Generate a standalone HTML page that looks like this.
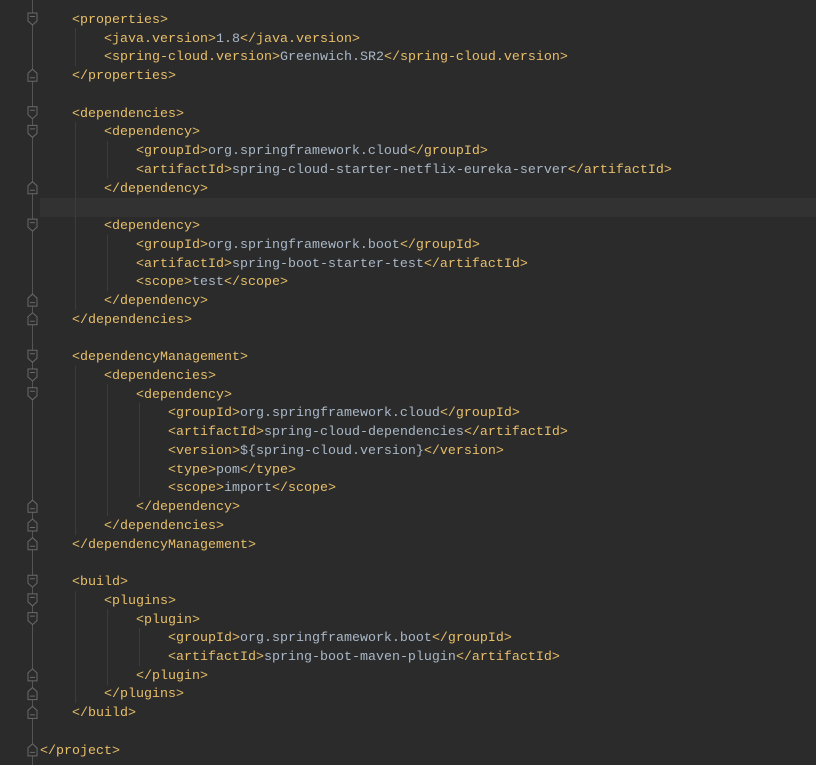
<!DOCTYPE html>
<html><head><meta charset="utf-8"><style>
html,body{margin:0;padding:0;background:#2b2b2b;width:816px;height:765px;overflow:hidden}
.hl{position:absolute;left:40px;top:198px;width:776px;height:19px;background:#323232}
pre{position:absolute;left:40px;top:12px;margin:0;font-family:"Liberation Mono",monospace;font-size:13.33px;line-height:18.74px;color:#a9b7c6}
.t{color:#e8bf6a}
svg{position:absolute;left:0;top:0}
</style></head><body>
<div class="hl"></div>
<svg width="816" height="765">
<line x1="32.5" y1="0" x2="32.5" y2="765" stroke="#555" stroke-width="1"/>
<g stroke="#3c3c3c" stroke-width="1">
<line x1="75.5" y1="28" x2="75.5" y2="66"/>
<line x1="75.5" y1="122" x2="75.5" y2="310"/>
<line x1="107.5" y1="141" x2="107.5" y2="178"/>
<line x1="107.5" y1="235" x2="107.5" y2="291"/>
<line x1="75.5" y1="366" x2="75.5" y2="535"/>
<line x1="107.5" y1="384" x2="107.5" y2="516"/>
<line x1="139.5" y1="403" x2="139.5" y2="497"/>
<line x1="75.5" y1="591" x2="75.5" y2="703"/>
<line x1="107.5" y1="609" x2="107.5" y2="685"/>
<line x1="139.5" y1="628" x2="139.5" y2="666"/>
</g>
<g fill="#2b2b2b" stroke="#6a6a6a" stroke-width="1">
<path d="M28 13h9v8l-4.5 4-4.5-4z M30 16.5h5"/>
<path d="M28 106.7h9v8l-4.5 4-4.5-4z M30 110.2h5"/>
<path d="M28 125.4h9v8l-4.5 4-4.5-4z M30 128.9h5"/>
<path d="M28 219.1h9v8l-4.5 4-4.5-4z M30 222.6h5"/>
<path d="M28 350.3h9v8l-4.5 4-4.5-4z M30 353.8h5"/>
<path d="M28 369h9v8l-4.5 4-4.5-4z M30 372.5h5"/>
<path d="M28 387.8h9v8l-4.5 4-4.5-4z M30 391.3h5"/>
<path d="M28 575.2h9v8l-4.5 4-4.5-4z M30 578.7h5"/>
<path d="M28 593.9h9v8l-4.5 4-4.5-4z M30 597.4h5"/>
<path d="M28 612.6h9v8l-4.5 4-4.5-4z M30 616.1h5"/>
<path d="M28 81.2h9v-8l-4.5-4-4.5 4z M30 77.7h5"/>
<path d="M28 193.7h9v-8l-4.5-4-4.5 4z M30 190.2h5"/>
<path d="M28 306.1h9v-8l-4.5-4-4.5 4z M30 302.6h5"/>
<path d="M28 324.8h9v-8l-4.5-4-4.5 4z M30 321.3h5"/>
<path d="M28 512.2h9v-8l-4.5-4-4.5 4z M30 508.7h5"/>
<path d="M28 531h9v-8l-4.5-4-4.5 4z M30 527.5h5"/>
<path d="M28 549.7h9v-8l-4.5-4-4.5 4z M30 546.2h5"/>
<path d="M28 680.9h9v-8l-4.5-4-4.5 4z M30 677.4h5"/>
<path d="M28 699.6h9v-8l-4.5-4-4.5 4z M30 696.1h5"/>
<path d="M28 718.4h9v-8l-4.5-4-4.5 4z M30 714.9h5"/>
<path d="M28 755.9h9v-8l-4.5-4-4.5 4z M30 752.4h5"/>
</g>
</svg>
<pre>    <span class="t">&lt;properties&gt;</span>
        <span class="t">&lt;java.version&gt;</span>1.8<span class="t">&lt;/java.version&gt;</span>
        <span class="t">&lt;spring-cloud.version&gt;</span>Greenwich.SR2<span class="t">&lt;/spring-cloud.version&gt;</span>
    <span class="t">&lt;/properties&gt;</span>

    <span class="t">&lt;dependencies&gt;</span>
        <span class="t">&lt;dependency&gt;</span>
            <span class="t">&lt;groupId&gt;</span>org.springframework.cloud<span class="t">&lt;/groupId&gt;</span>
            <span class="t">&lt;artifactId&gt;</span>spring-cloud-starter-netflix-eureka-server<span class="t">&lt;/artifactId&gt;</span>
        <span class="t">&lt;/dependency&gt;</span>

        <span class="t">&lt;dependency&gt;</span>
            <span class="t">&lt;groupId&gt;</span>org.springframework.boot<span class="t">&lt;/groupId&gt;</span>
            <span class="t">&lt;artifactId&gt;</span>spring-boot-starter-test<span class="t">&lt;/artifactId&gt;</span>
            <span class="t">&lt;scope&gt;</span>test<span class="t">&lt;/scope&gt;</span>
        <span class="t">&lt;/dependency&gt;</span>
    <span class="t">&lt;/dependencies&gt;</span>

    <span class="t">&lt;dependencyManagement&gt;</span>
        <span class="t">&lt;dependencies&gt;</span>
            <span class="t">&lt;dependency&gt;</span>
                <span class="t">&lt;groupId&gt;</span>org.springframework.cloud<span class="t">&lt;/groupId&gt;</span>
                <span class="t">&lt;artifactId&gt;</span>spring-cloud-dependencies<span class="t">&lt;/artifactId&gt;</span>
                <span class="t">&lt;version&gt;</span>${spring-cloud.version}<span class="t">&lt;/version&gt;</span>
                <span class="t">&lt;type&gt;</span>pom<span class="t">&lt;/type&gt;</span>
                <span class="t">&lt;scope&gt;</span>import<span class="t">&lt;/scope&gt;</span>
            <span class="t">&lt;/dependency&gt;</span>
        <span class="t">&lt;/dependencies&gt;</span>
    <span class="t">&lt;/dependencyManagement&gt;</span>

    <span class="t">&lt;build&gt;</span>
        <span class="t">&lt;plugins&gt;</span>
            <span class="t">&lt;plugin&gt;</span>
                <span class="t">&lt;groupId&gt;</span>org.springframework.boot<span class="t">&lt;/groupId&gt;</span>
                <span class="t">&lt;artifactId&gt;</span>spring-boot-maven-plugin<span class="t">&lt;/artifactId&gt;</span>
            <span class="t">&lt;/plugin&gt;</span>
        <span class="t">&lt;/plugins&gt;</span>
    <span class="t">&lt;/build&gt;</span>

<span class="t">&lt;/project&gt;</span></pre>
</body></html>
